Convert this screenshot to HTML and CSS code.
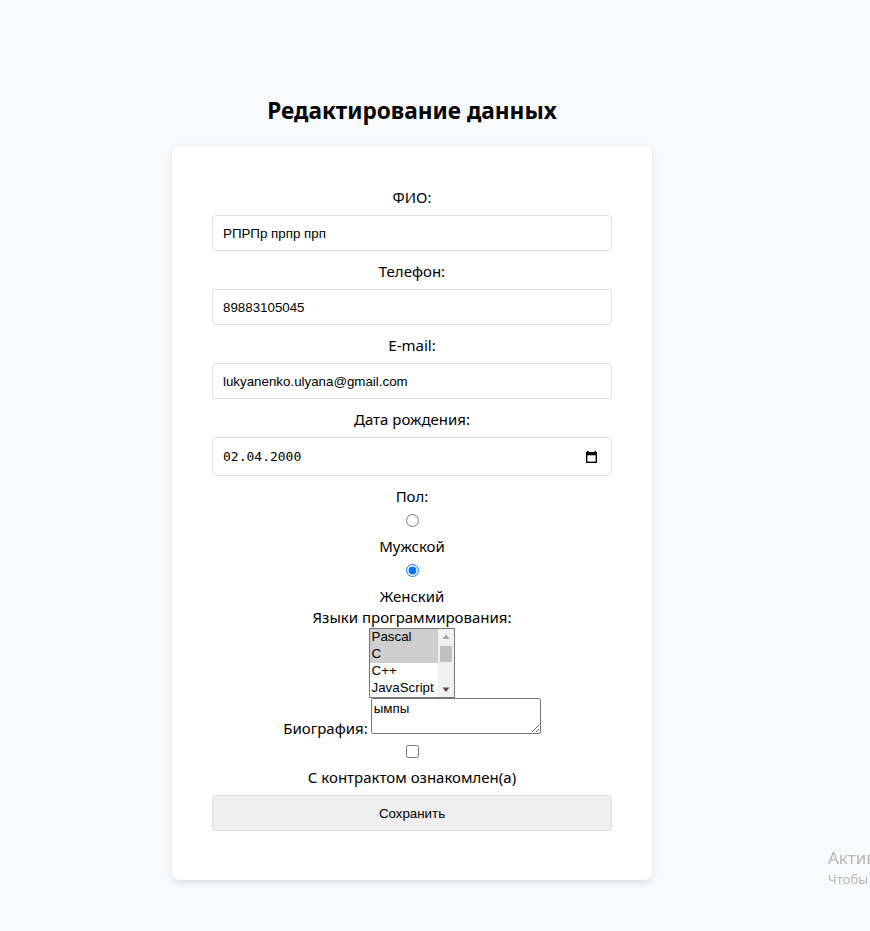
FILE: index.html
```html
<!DOCTYPE html>
<html lang="ru">
<head>
<meta charset="utf-8">
<title>Редактирование данных</title>
<link rel="stylesheet" href="styles.css">
</head>
<body>
<div class="page">
  <h2 class="title">Редактирование данных</h2>
  <form class="card">
    <label class="field-label" for="fio">ФИО:</label>
    <input class="text-input" id="fio" type="text" value="РПРПр прпр прп">
    <label class="field-label" for="phone">Телефон:</label>
    <input class="text-input" id="phone" type="tel" value="89883105045">
    <label class="field-label" for="email">E-mail:</label>
    <input class="text-input" id="email" type="email" value="lukyanenko.ulyana@gmail.com">
    <label class="field-label" for="birth">Дата рождения:</label>
    <div class="date-box">
      <input class="date-text" id="birth" type="text" value="02.04.2000">
      <svg class="cal-icon" width="11" height="12" viewBox="0 0 11 12" aria-hidden="true">
        <rect x="1" y="0" width="1.6" height="2.5" fill="#000"/>
        <rect x="8.4" y="0" width="1.6" height="2.5" fill="#000"/>
        <rect x="0.7" y="1.7" width="9.6" height="9.6" fill="none" stroke="#000" stroke-width="1.4"/>
        <rect x="0.7" y="1.7" width="9.6" height="2.6" fill="#000"/>
      </svg>
    </div>

    <div class="group-label">Пол:</div>
    <input class="radio" type="radio" name="gender" id="male">
    <label class="option-label" for="male">Мужской</label>
    <input class="radio" type="radio" name="gender" id="female" checked>
    <label class="option-label" for="female">Женский</label>

    <label class="langs-label" for="langs">Языки программирования:</label>
    <div class="langs-wrap">
      <select class="langs" id="langs" multiple>
        <option selected>Pascal</option>
        <option selected>C</option>
        <option>C++</option>
        <option>JavaScript</option>
        <option>PHP</option>
        <option>Python</option>
        <option>Java</option>
        <option>Haskell</option>
        <option>Clojure</option>
        <option>Prolog</option>
        <option>Scala</option>
        <option>Go</option>
      </select>
      <div class="fake-scroll" aria-hidden="true">
        <svg class="sb-arrow" width="16" height="16" viewBox="0 0 16 16"><polygon points="8,5.5 11.5,10 4.5,10" fill="#a3a3a3"/></svg>
        <div class="sb-track"><div class="sb-thumb"></div></div>
        <svg class="sb-arrow" width="16" height="16" viewBox="0 0 16 16"><polygon points="4.5,6.5 11.5,6.5 8,11" fill="#505050"/></svg>
      </div>
    </div>

    <div class="bio-row">
      <label class="bio-label" for="bio">Биография:</label>
      <textarea class="bio" id="bio">ымпы</textarea>
    </div>

    <input class="check" type="checkbox" id="contract">
    <label class="option-label contract-label" for="contract">С контрактом ознакомлен(а)</label>

    <button class="save" type="button">Сохранить</button>
  </form>
</div>
<div class="watermark">
  <div class="wm-title">Активация Windows</div>
  <div class="wm-text">Чтобы активировать Windows, перейдите в раздел "Параметры".</div>
</div>
</body>
</html>
```
FILE: styles.css
```css
html, body {
  margin: 0;
  padding: 0;
  overflow: hidden;
}
body {
  background: #f8f9fa;
  font-family: "Noto Sans", "Open Sans", sans-serif;
  color: #000;
  height: 931px;
}
.page {
  display: flex;
  flex-direction: column;
  align-items: center;
  padding: 95px 46px 0 0;
}
.title {
  margin: 0 0 19px;
  font-size: 22.6px;
  line-height: 32px;
  font-weight: 700;
}
.card {
  box-sizing: border-box;
  width: 480px;
  background: #fff;
  border-radius: 8px;
  box-shadow: 0 2px 6px rgba(0, 0, 0, 0.12);
  padding: 41px 40px 40px;
  display: flex;
  flex-direction: column;
  align-items: center;
  text-align: center;
}
.field-label,
.group-label,
.option-label,
.langs-label {
  display: block;
  font-size: 15px;
  line-height: 21px;
}
.field-label {
  margin-bottom: 7px;
}
.text-input {
  box-sizing: border-box;
  width: 100%;
  height: 36px;
  margin: 0 0 10px;
  padding: 0 10px;
  border: 1px solid #ddd;
  border-radius: 4px;
  font-family: "Liberation Sans", Arial, sans-serif;
  font-size: 13.33px;
  color: #000;
  background: #fff;
}
.date-box {
  box-sizing: border-box;
  width: 100%;
  height: 39px;
  margin: 0 0 10px;
  padding: 0 14px 0 10px;
  border: 1px solid #ddd;
  border-radius: 4px;
  background: #fff;
  display: flex;
  align-items: center;
}
.date-text {
  flex: 1;
  min-width: 0;
  border: 0;
  padding: 0;
  margin: 0;
  outline: none;
  background: transparent;
  font-family: "DejaVu Sans Mono", monospace;
  font-size: 13px;
  color: #000;
}
.cal-icon {
  display: block;
  flex: none;
}
.radio {
  margin: 7px 0 0;
  width: 13px;
  height: 13px;
}
.option-label {
  margin-top: 9px;
}
.langs-label {
  margin-top: 0;
}
.langs-wrap {
  position: relative;
  width: 86px;
  height: 70px;
  margin-left: -1px;
}
.langs {
  box-sizing: border-box;
  display: block;
  width: 86px;
  height: 70px;
  margin: 0;
  padding: 0;
  font-family: "Liberation Sans", Arial, sans-serif;
  font-size: 13.33px;
  color: #000;
  border: 1px solid #767676;
  border-radius: 0;
  background: #fff;
}
.langs option {
  padding: 0 2px;
  line-height: 17px;
  min-height: 17px;
}
.langs option:checked {
  background: #cecece;
  color: #000;
}
.fake-scroll {
  position: absolute;
  top: 1px;
  right: 1px;
  bottom: 1px;
  width: 16px;
  background: #f1f1f1;
  display: flex;
  flex-direction: column;
}
.sb-arrow {
  display: block;
  flex: none;
}
.sb-track {
  flex: 1;
  padding: 1px 2px 0;
}
.sb-thumb {
  height: 16px;
  background: #c1c1c1;
}
.bio-row {
  display: flex;
  align-items: flex-end;
  justify-content: center;
  margin-top: 0;
}
.bio-label {
  font-size: 15px;
  line-height: 12px;
  margin-right: 3px;
}
.bio {
  box-sizing: border-box;
  width: 170px;
  height: 36px;
  margin: 0;
  padding: 2px;
  border: 1px solid #767676;
  border-radius: 2px;
  font-family: "Liberation Sans", Arial, sans-serif;
  font-size: 13.33px;
  text-align: left;
  resize: both;
}
.check {
  margin: 11px 0 0;
  width: 13px;
  height: 13px;
}
.contract-label {
  margin-top: 9px;
}
.save {
  box-sizing: border-box;
  width: 100%;
  height: 36px;
  margin: 7px 0 9px;
  background: #efefef;
  border: 1px solid #ddd;
  border-radius: 4px;
  font-family: "Liberation Sans", Arial, sans-serif;
  font-size: 13.33px;
  color: #000;
}
.watermark {
  position: fixed;
  left: 828px;
  top: 846px;
  white-space: nowrap;
  color: #b8b8b8;
  font-family: "Noto Sans", "Open Sans", sans-serif;
}
.wm-title {
  font-size: 17px;
  line-height: 24px;
}
.wm-text {
  font-size: 13px;
  line-height: 18px;
}
```
